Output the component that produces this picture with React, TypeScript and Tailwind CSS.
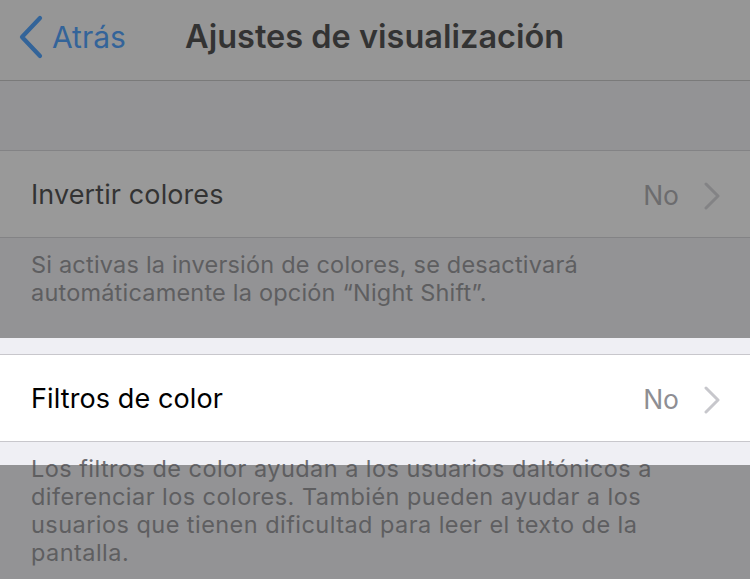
const font = { fontFamily: "Inter, 'Noto Sans', sans-serif" };

function BackChevron() {
  return (
    <svg width="28" height="44" viewBox="0 0 28 44" className="shrink-0">
      <path
        d="M23 3 L5 22 L23 41"
        fill="none"
        stroke="#007aff"
        strokeWidth="4.2"
        strokeLinecap="round"
        strokeLinejoin="round"
      />
    </svg>
  );
}

function Disclosure() {
  return (
    <svg width="18" height="28" viewBox="0 0 18 28" className="shrink-0">
      <path
        d="M3 2 L15 14 L3 26"
        fill="none"
        stroke="#c7c7cc"
        strokeWidth="3"
        strokeLinecap="round"
        strokeLinejoin="round"
      />
    </svg>
  );
}

type RowProps = { label: string; value: string };

function Row({ label, value }: RowProps) {
  return (
    <div className="flex h-[88px] items-center border-y border-[#c8c7cc] bg-white pl-[31px] pr-[29px] pt-[3px]">
      <span className="flex-1 text-[27px] tracking-[0.1px] text-black">{label}</span>
      <span className="mr-[24px] text-[26.5px] text-[#8e8e93]">{value}</span>
      <Disclosure />
    </div>
  );
}

export default function App() {
  return (
    <div
      className="relative h-[579px] w-[750px] overflow-hidden bg-[#efeff4]"
      style={font}
    >
      <div className="flex h-[81px] items-center border-b border-[#b2b2b2] bg-[#f7f7f7] px-[17px] pb-[6px]">
        <div className="flex w-[168px] items-center gap-[7px]">
          <BackChevron />
          <span className="text-[30px] text-[#007aff]">Atrás</span>
        </div>
        <span className="text-[32.5px] font-semibold text-black">
          Ajustes de visualización
        </span>
      </div>

      <div className="h-[69px]" />

      <Row label="Invertir colores" value="No" />
      <p className="pl-[31px] pr-[60px] pt-[13px] pb-[47px] text-[23.5px] leading-[28px] tracking-[0.2px] text-[#6d6d72]">
        Si activas la inversión de colores, se desactivará automáticamente la
        opción “Night Shift”.
      </p>

      <Row label="Filtros de color" value="No" />
      <p className="pl-[31px] pr-[60px] pt-[13px] text-[23.5px] leading-[28px] tracking-[0.45px] text-[#6d6d72]">
        Los filtros de color ayudan a los usuarios daltónicos a diferenciar los
        colores. También pueden ayudar a los usuarios que tienen dificultad
        para leer el texto de la pantalla.
      </p>

      {/* spotlight on the color filters row, rest of the screen dimmed */}
      <div className="pointer-events-none absolute left-0 top-[338px] h-[127px] w-full shadow-[0_0_0_2000px_rgba(85,85,85,0.6)]" />
    </div>
  );
}
